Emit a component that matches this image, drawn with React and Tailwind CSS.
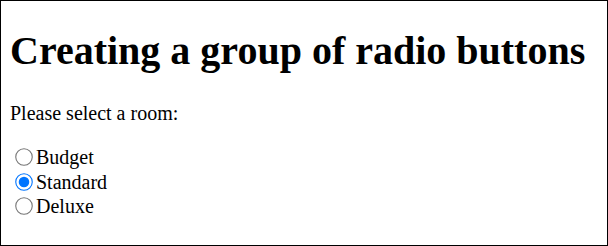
import React, { useState } from 'react';

const rooms = ['Budget', 'Standard', 'Deluxe'];

const App = () => {
  const [room, setRoom] = useState('Standard');

  return (
    <div className="w-[608px] h-[246px] border border-black bg-white pl-[9px] pt-[27px] font-['Liberation_Serif',serif] text-black">
      <h1 className="text-[40px] leading-[46px] font-bold">
        Creating a group of radio buttons
      </h1>
      <p className="text-[20px] leading-[22px] mt-[28px]">Please select a room:</p>
      {/* Room options */}
      <form className="mt-[21px] text-[20px] leading-[24.5px]">
        {rooms.map((r) => (
          <label key={r} className="flex items-center h-[24.5px]">
            <input
              type="radio"
              name="room"
              value={r}
              checked={room === r}
              onChange={() => setRoom(r)}
              className="w-4 h-4 ml-[6px] mr-[4px] scale-[1.1]"
            />
            <span>{r}</span>
          </label>
        ))}
      </form>
    </div>
  );
};

export default App;
